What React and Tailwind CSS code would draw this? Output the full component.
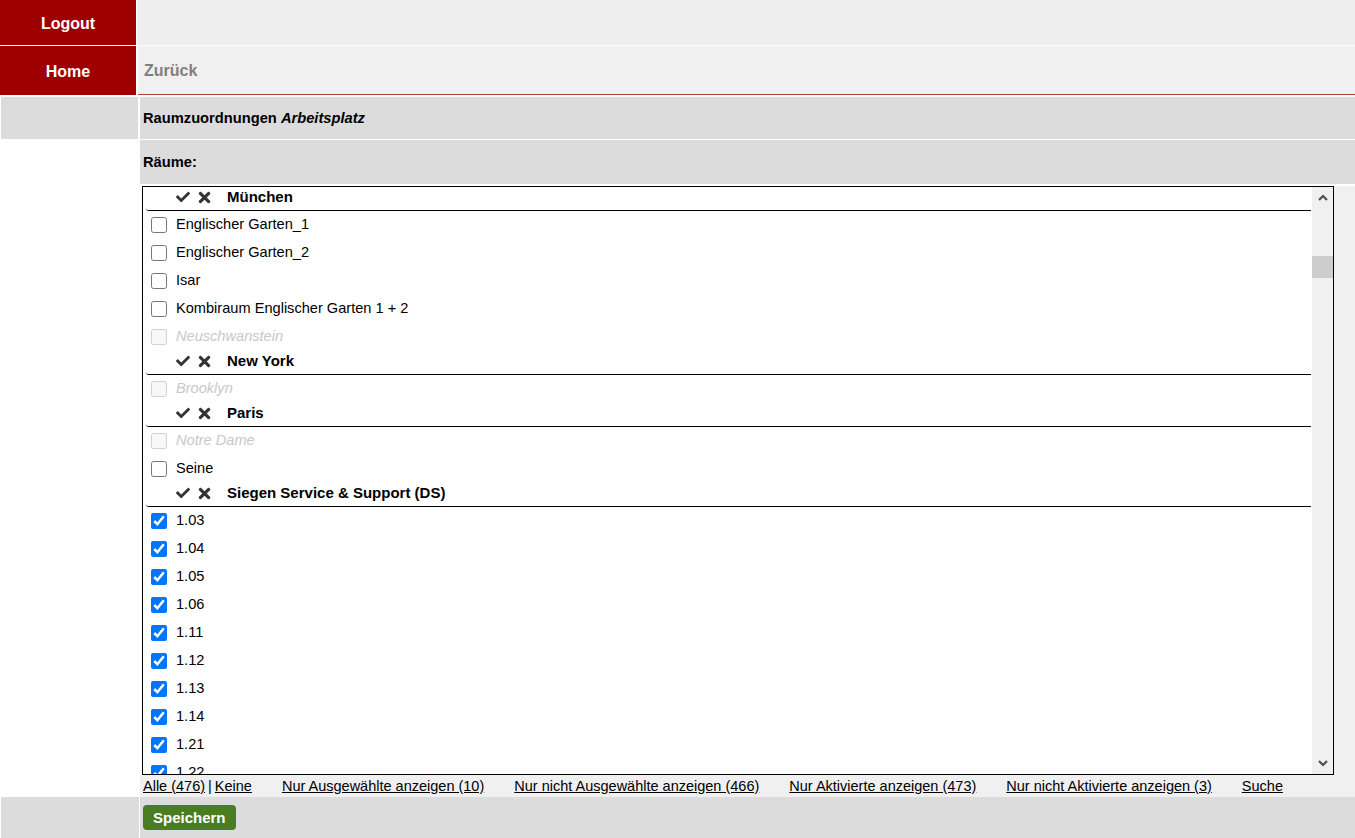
import React from "react";
import { FaCheck, FaTimes } from "react-icons/fa";

const groups = [
  {
    name: "München",
    items: [
      { label: "Englischer Garten_1" },
      { label: "Englischer Garten_2" },
      { label: "Isar" },
      { label: "Kombiraum Englischer Garten 1 + 2" },
      { label: "Neuschwanstein", disabled: true },
    ],
  },
  { name: "New York", items: [{ label: "Brooklyn", disabled: true }] },
  {
    name: "Paris",
    items: [{ label: "Notre Dame", disabled: true }, { label: "Seine" }],
  },
  {
    name: "Siegen Service & Support (DS)",
    items: ["1.03", "1.04", "1.05", "1.06", "1.11", "1.12", "1.13", "1.14", "1.21", "1.22"].map(
      (l) => ({ label: l, checked: true })
    ),
  },
];

function Header({ name }) {
  return (
    <div className="h-[24px] ml-[3px] mr-[1px] border-b border-black rounded-bl-[3px] flex items-center pb-[3px] pl-[30px]">
      <FaCheck className="w-[14px] h-[14px] text-[#333]" />
      <FaTimes className="w-[15px] h-[17px] text-[#333] ml-[7px]" />
      <span className="ml-[15px] font-bold text-[15px] text-black">{name}</span>
    </div>
  );
}

function Item({ label, disabled, checked }) {
  return (
    <div className="h-[28px] flex items-center pl-[8px]">
      <input
        type="checkbox"
        className="w-4 h-4 m-0 accent-[#0075ff]"
        defaultChecked={!!checked}
        disabled={!!disabled}
      />
      <span
        className={
          "ml-[9px] text-[14.6px] " + (disabled ? "italic text-[#c8c8c8]" : "text-black")
        }
      >
        {label}
      </span>
    </div>
  );
}

export default function App() {
  const red = "bg-[#9e0000]";
  return (
    <div className="w-full min-h-screen bg-white font-['Liberation_Sans',Arial,sans-serif] text-black">
      {/* Row 1 */}
      <div className="flex h-[45px]">
        <div className={"w-[136px] flex items-center justify-center pt-[3px] text-white font-bold text-[16px] " + red}>
          Logout
        </div>
        <div className="flex-1 ml-[1px] bg-[#eeeeee]" />
      </div>
      {/* Row 2 */}
      <div className="flex h-[49px] mt-[1px]">
        <div className={"w-[136px] flex items-center justify-center pt-[2px] text-white font-bold text-[16px] " + red}>
          Home
        </div>
        <div className="flex-1 ml-[2px] bg-[#f0f0f0] border-b border-[#b03a3a] flex items-center pt-[1px] pl-[6px] text-[#7f7f7f] font-bold text-[16px]">
          Zurück
        </div>
      </div>
      {/* Row 3 */}
      <div className="flex h-[42px] mt-[2px]">
        <div className="w-[137px] ml-[1px] bg-[#dcdcdc]" />
        <div className="flex-1 ml-[2px] bg-[#dcdcdc] flex items-center pt-[1px] pl-[3px] font-bold text-[14.7px]">
          Raumzuordnungen&nbsp;<i>Arbeitsplatz</i>
        </div>
      </div>
      {/* Row 4 */}
      <div className="flex h-[44px] mt-[1px]">
        <div className="w-[140px]" />
        <div className="flex-1 bg-[#dcdcdc] flex items-center pl-[3px] font-bold text-[14.7px]">Räume:</div>
      </div>
      {/* List */}
      <div className="flex h-[589px] mt-[2px]">
        <div className="w-[142px]" />
        <div className="flex-1 border border-black flex overflow-hidden">
          <div className="flex-1 overflow-hidden">
            {groups.map((g) => (
              <div key={g.name}>
                <Header name={g.name} />
                {g.items.map((it) => (
                  <Item key={it.label} {...it} />
                ))}
              </div>
            ))}
          </div>
          <div className="w-[21px] bg-[#f0f0f0] flex flex-col">
            <div className="h-[21px] flex items-center justify-center">
              <svg width="10" height="7" viewBox="0 0 10 7">
                <polyline points="1,6 5,2 9,6" fill="none" stroke="#505050" strokeWidth="2.2" />
              </svg>
            </div>
            <div className="mt-[48px] h-[22px] bg-[#cdcdcd]" />
            <div className="flex-1" />
            <div className="h-[21px] flex items-center justify-center">
              <svg width="10" height="7" viewBox="0 0 10 7">
                <polyline points="1,1 5,5 9,1" fill="none" stroke="#505050" strokeWidth="2.2" />
              </svg>
            </div>
          </div>
        </div>
        <div className="w-[21px] bg-[#f0f0f0]" />
      </div>
      {/* Links */}
      <div className="flex h-[22px]">
        <div className="w-[140px]" />
        <div className="flex-1 bg-[#f0f0f0] flex items-center pt-[1px] pl-[3px] gap-[30px] text-[14.5px]">
          <span className="whitespace-nowrap">
            <a className="underline">Alle (476)</a>
            <span className="mx-[3px]">|</span>
            <a className="underline">Keine</a>
          </span>
          <a className="underline whitespace-nowrap">Nur Ausgewählte anzeigen (10)</a>
          <a className="underline whitespace-nowrap">Nur nicht Ausgewählte anzeigen (466)</a>
          <a className="underline whitespace-nowrap">Nur Aktivierte anzeigen (473)</a>
          <a className="underline whitespace-nowrap">Nur nicht Aktivierte anzeigen (3)</a>
          <a className="underline whitespace-nowrap">Suche</a>
        </div>
      </div>
      {/* Save row */}
      <div className="flex h-[41px]">
        <div className="w-[138px] ml-[1px] bg-[#dcdcdc]" />
        <div className="flex-1 ml-[1px] bg-[#dcdcdc] pl-[3px] pt-[8px]">
          <button className="h-[25px] px-[10px] rounded-[4px] bg-[#4a7c22] text-white font-bold text-[15px] leading-none">
            Speichern
          </button>
        </div>
      </div>
    </div>
  );
}
